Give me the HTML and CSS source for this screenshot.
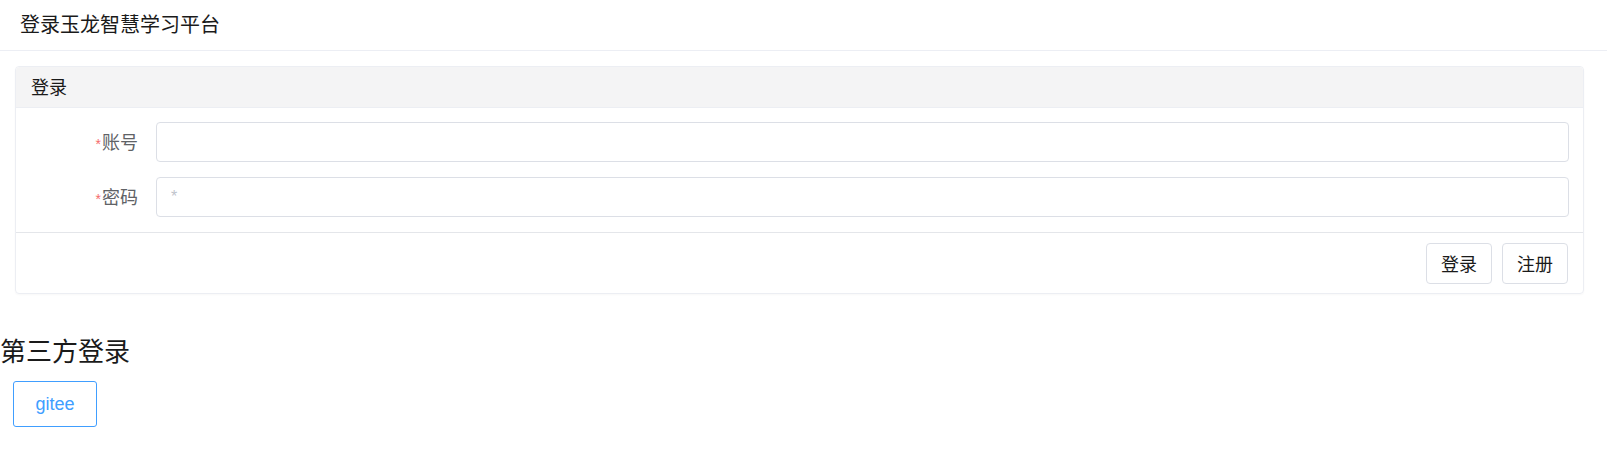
FILE: index.html
```html
<!DOCTYPE html>
<html lang="zh-CN">
<head>
<meta charset="utf-8">
<title>登录玉龙智慧学习平台</title>
<link rel="stylesheet" href="styles.css">
</head>
<body>
<header class="topbar">
  <div class="brand">登录玉龙智慧学习平台</div>
</header>
<section class="card">
  <div class="card-header">登录</div>
  <form class="card-body">
    <div class="form-row">
      <label class="form-label"><span class="req">*</span>账号</label>
      <input class="form-input" type="text">
    </div>
    <div class="form-row">
      <label class="form-label"><span class="req">*</span>密码</label>
      <input class="form-input" type="password" placeholder="*">
    </div>
  </form>
  <div class="card-footer">
    <button class="btn" type="button">登录</button>
    <button class="btn" type="button">注册</button>
  </div>
</section>
<h2 class="third-title">第三方登录</h2>
<div class="third-list">
  <button class="btn-oauth" type="button">gitee</button>
</div>
</body>
</html>
```
FILE: styles.css
```css
* { box-sizing: border-box; }
body {
  margin: 0;
  font-family: "Liberation Sans", "Noto Sans CJK SC", sans-serif;
  color: #1f1f1f;
  background: #fff;
}
.topbar {
  height: 51px;
  border-bottom: 1px solid #eceef4;
  display: flex;
  align-items: center;
  padding: 0 0 4px 20px;
}
.brand {
  font-size: 20px;
  color: #1a1a1a;
}
.card {
  margin: 15px 23px 0 15px;
  border: 1px solid #eceef3;
  border-radius: 4px;
  box-shadow: 0 1px 2px rgba(0,0,0,0.03);
}
.card-header {
  height: 41px;
  background: #f4f4f5;
  border-bottom: 1px solid #eceef3;
  border-radius: 4px 4px 0 0;
  display: flex;
  align-items: center;
  padding: 0 15px 3px;
  font-size: 18px;
  color: #1a1a1a;
}
.card-body {
  margin: 0;
  padding: 14px 14px 15px 0;
  display: flex;
  flex-direction: column;
  gap: 15px;
}
.form-row {
  display: flex;
  align-items: center;
}
.form-label {
  width: 140px;
  flex: none;
  text-align: right;
  padding: 0 18px 3px 0;
  font-size: 18px;
  color: #606266;
}
.req {
  color: #f56c6c;
  font-size: 14px;
  margin-right: 1px;
}
.form-input {
  flex: 1;
  height: 40px;
  border: 1px solid #dcdfe6;
  border-radius: 4px;
  padding: 0 14px;
  font-size: 16px;
  font-family: inherit;
  outline: none;
}
.form-input::placeholder {
  color: #c0c4cc;
}
.card-footer {
  border-top: 1px solid #e4e6ea;
  display: flex;
  justify-content: flex-end;
  gap: 10px;
  padding: 10px 15px 9px;
}
.btn {
  height: 41px;
  padding: 0 14px 2px;
  background: #fff;
  border: 1px solid #dcdfe6;
  border-radius: 4px;
  font-family: inherit;
  font-size: 18px;
  color: #1a1a1a;
}
.third-title {
  margin: 42px 0 13px;
  font-size: 26px;
  font-weight: normal;
  line-height: 32px;
  color: #1a1a1a;
}
.third-list {
  padding-left: 13px;
}
.btn-oauth {
  width: 84px;
  height: 46px;
  background: #fff;
  border: 1px solid #409eff;
  border-radius: 3px;
  color: #409eff;
  font-family: "Liberation Sans", sans-serif;
  font-size: 18px;
}
```
